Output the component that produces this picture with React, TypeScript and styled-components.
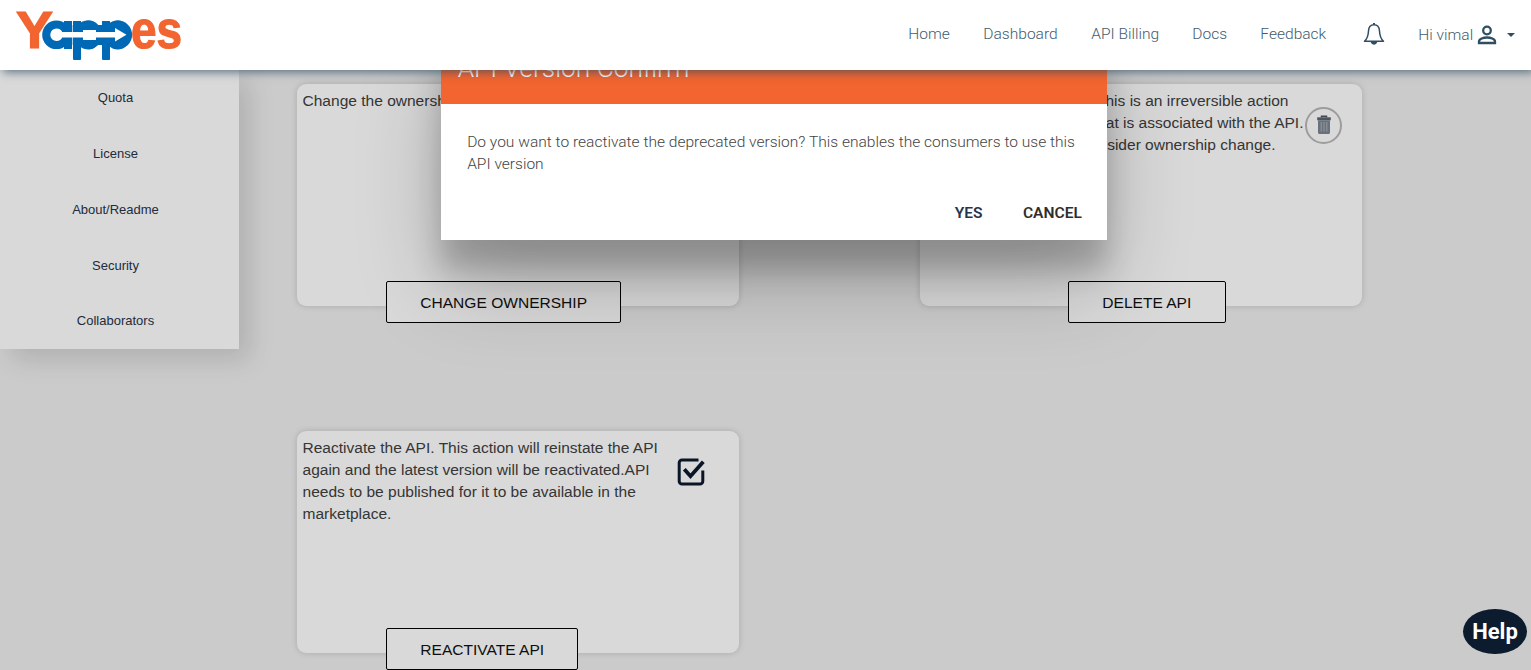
import React from "react";
import styled, { createGlobalStyle } from "styled-components";

const Global = createGlobalStyle`
  *, *::before, *::after { box-sizing: border-box; }
  html, body { margin: 0; height: 100%; overflow: hidden; background: #efefef; }
  body { font-family: Roboto, "Open Sans", sans-serif; }
`;

const Page = styled.div`
  height: 100vh;
  overflow: hidden;
  display: flex;
  flex-direction: column;
  isolation: isolate;
`;

const Header = styled.header`
  flex: none;
  height: 70px;
  background: #fff;
  display: flex;
  align-items: center;
  justify-content: space-between;
  padding: 0 16px 0 0;
  position: relative;
  z-index: 30;
  box-shadow: 3px 2px 9px 0 rgba(48, 78, 98, 0.75);
`;

const Nav = styled.nav`
  display: flex;
  align-items: center;
  height: 70px;
  padding-bottom: 3px;
  color: #3f5c6e;
  font-weight: 300;
  font-size: 15.55px;
`;

const NavLink = styled.a<{ $w: number }>`
  width: ${(p) => p.$w}px;
  white-space: nowrap;
`;

const BellSlot = styled.span`
  display: flex;
  width: 55px;
`;

const UserMenu = styled.span`
  display: flex;
  align-items: center;
  padding-top: 2px;
  white-space: nowrap;
`;

const Caret = styled.i`
  margin-left: 10px;
  border: 4.5px solid transparent;
  border-top-color: #304e62;
  border-bottom: 0;
`;

const Main = styled.main`
  flex: 1;
  min-height: 0;
  display: flex;
  align-items: flex-start;
`;

const Sidebar = styled.aside`
  flex: none;
  width: 239px;
  height: 278.7px;
  padding-right: 8px;
  background: #fff;
  display: flex;
  flex-direction: column;
  box-shadow: 11px 11px 24px rgba(0, 0, 0, 0.13);
`;

const SideItem = styled.a`
  flex: 1;
  display: flex;
  align-items: center;
  justify-content: center;
  font: 13px "Liberation Sans", Arial, sans-serif;
  color: #26344a;
`;

const Grid = styled.section`
  display: grid;
  grid-template-columns: 442px 442px;
  grid-auto-rows: 221.5px;
  column-gap: 181px;
  row-gap: 125.5px;
  padding: 14px 0 0 58px;
`;

const Card = styled.article`
  background: #fff;
  border-radius: 9px;
  box-shadow: 0 0 6px rgba(0, 0, 0, 0.17);
  padding: 5.5px 20px 0 5.5px;
  display: flex;
  flex-direction: column;
  justify-content: space-between;
`;

const CardTop = styled.div`
  display: flex;
  justify-content: space-between;
`;

const CardText = styled.p`
  margin: 0;
  font: 15.54px/22px "Liberation Sans", Arial, sans-serif;
  color: #404040;
  white-space: nowrap;
`;

const RightText = styled(CardText)`
  width: 378px;
  display: flex;
  flex-direction: column;
  align-items: flex-start;
`;

const TextLine = styled.span<{ $end: number }>`
  align-self: flex-end;
  margin-right: ${(p) => p.$end}px;
`;

const TrashRing = styled.span`
  flex: none;
  width: 37px;
  height: 37px;
  margin-top: 17px;
  border: 2px solid #b9b9b9;
  border-radius: 50%;
  display: flex;
  align-items: center;
  justify-content: center;
`;

const CheckSlot = styled.span`
  margin: 20px 13px 0 0;
`;

const CardButton = styled.button<{ $left: number }>`
  flex: none;
  align-self: flex-start;
  height: 42px;
  margin: 0 0 -17.5px ${(p) => p.$left}px;
  padding: 1px 33.3px 0;
  background: #fff;
  border: 1.3px solid #000;
  border-radius: 2px;
  font: 15.55px "Liberation Sans", Arial, sans-serif;
  color: #111;
  white-space: nowrap;
`;

const Overlay = styled.div`
  position: absolute;
  inset: 0;
  z-index: 10;
  background: rgba(0, 0, 0, 0.15);
  display: flex;
  justify-content: center;
  align-items: flex-start;
  padding-left: 17px;
`;

const Dialog = styled.div`
  width: 666.7px;
  margin-top: 32px;
  background: #fff;
  box-shadow: 0 30px 27px 0 rgba(0, 0, 0, 0.2), 0 44px 86px 0 rgba(0, 0, 0, 0.22);
`;

const DialogTitle = styled.h4`
  margin: 0;
  height: 71.7px;
  padding: 19px 17px 0;
  background: #f26430;
  color: #fff;
  font-weight: 300;
  font-size: 26.3px;
  line-height: 34px;
`;

const DialogText = styled.p`
  margin: 0;
  padding: 27.3px 26px 0 26.5px;
  font-weight: 300;
  font-size: 15.55px;
  line-height: 22px;
  color: #444;
`;

const Actions = styled.div`
  display: flex;
  justify-content: flex-end;
  gap: 40.5px;
  padding: 29.3px 25.5px 0 0;
  height: 65px;
`;

const Action = styled.button<{ $c: string }>`
  height: 18px;
  padding: 0;
  border: 0;
  background: none;
  font: 600 15.55px/18px Roboto, sans-serif;
  color: ${(p) => p.$c};
`;

const Help = styled.button`
  position: absolute;
  right: 4px;
  bottom: 16px;
  z-index: 40;
  width: 64px;
  height: 45.5px;
  padding: 0;
  border: 0;
  border-radius: 50%;
  background: #0c1b2e;
  color: #fff;
  font: 700 22px Roboto, sans-serif;
`;

const Logo = () => (
  <svg width="200" height="70" viewBox="0 0 200 70" fontFamily="Liberation Sans, Arial, sans-serif" fontWeight="700">
    <g fill="#f26430" stroke="#f26430" strokeWidth="1.200">
      <text x="16" y="48" fontSize="52.500" textLength="37" lengthAdjust="spacingAndGlyphs">Y</text>
      <text x="131" y="48" fontSize="51" textLength="51" lengthAdjust="spacingAndGlyphs">es</text>
    </g>
    <g fill="#0069b5">
      <text x="45" y="47.500" fontSize="46">a</text>
      <text x="70" y="48.500" fontSize="51">p</text>
      <text x="99" y="48.500" fontSize="51">p</text>
      <circle cx="56.500" cy="34.800" r="14.300" />
      <circle cx="88" cy="34.800" r="14.300" />
      <circle cx="117.800" cy="34.800" r="14.300" />
      <path d="M64 21h8v28h-8zM73 21h8v38.500h-8zM102 21h8v38.500h-8z" />
      <path d="M62 25h50v20H62z" />
    </g>
    <path d="M72.500 20v40" stroke="#fff" strokeWidth=".7" />
    <path d="M56.500 28.500c3 0 4.800 1.300 5.700 3.500H83v-2h13v2h19v-4l11.500 6.800L115 41.500V37.500H96V40H83v-2.500H62.200c-1 2.200-2.700 3.500-5.700 3.500a6.250 6.250 0 0 1 0-12.500z" fill="#fff" />
  </svg>
);

const Bell = () => (
  <svg width="22" height="24" viewBox="0 0 22 24" fill="none" stroke="#304e62" strokeWidth="1.500" strokeLinejoin="round">
    <path d="M11 2.800C7.300 2.800 5.700 5.600 5.500 9c-.2 4.500-.9 7.500-4 10.300h19C17.400 16.500 16.700 13.500 16.500 9c-.2-3.400-1.800-6.200-5.500-6.200z" />
    <path d="M11 1v1.500" strokeWidth="2" />
    <path d="M8.500 20a2.600 2.600 0 0 0 5 0z" fill="#304e62" />
  </svg>
);

const Person = () => (
  <svg width="20" height="20" viewBox="0 0 20 20" fill="none" stroke="#304e62" strokeWidth="2.300">
    <circle cx="10" cy="5.500" r="3.800" />
    <path d="M2 18v-1.500c0-2.600 4.500-4 8-4s8 1.400 8 4V18z" />
  </svg>
);

const Trash = () => (
  <svg width="16" height="20" viewBox="0 0 16 20">
    <path d="M5.500 2.500V1.300h5v1.200" fill="none" stroke="#4e5660" strokeWidth="1.500" />
    <path d="M1.200 2.300h13.600v3H1.200z" fill="#5c6570" />
    <path d="M2 5.300h12v12.200a1.500 1.500 0 0 1-1.500 1.500h-9A1.500 1.500 0 0 1 2 17.500z" fill="#7c8590" />
    <path d="M5.200 7v9.500M8 7v9.500M10.800 7v9.500" stroke="#aeb4bb" strokeWidth="1" />
  </svg>
);

const Check = () => (
  <svg width="29" height="30" viewBox="0 0 29 30" fill="none" stroke="#0c1b2e" strokeWidth="3">
    <path d="M21.500 3H5a2.800 2.800 0 0 0-2.800 2.800v18.400A2.800 2.800 0 0 0 5 27h18a2.800 2.800 0 0 0 2.800-2.800V13.500" />
    <path d="M7.300 12.300l6.200 6.900L26.300 4.800" strokeWidth="3.800" />
  </svg>
);

const sideItems = ["Quota", "License", "About/Readme", "Security", "Collaborators"];
const links: [string, number][] = [
  ["Home", 75],
  ["Dashboard", 108],
  ["API Billing", 101],
  ["Docs", 68],
  ["Feedback", 103],
];

export default function App() {
  return (
    <Page>
      <Global />
      <Header>
        <Logo />
        <Nav>
          {links.map(([label, w]) => (
            <NavLink key={label} $w={w}>{label}</NavLink>
          ))}
          <BellSlot><Bell /></BellSlot>
          <UserMenu>
            Hi vimal&nbsp;<Person /><Caret />
          </UserMenu>
        </Nav>
      </Header>
      <Main>
        <Sidebar>
          {sideItems.map((s) => <SideItem key={s}>{s}</SideItem>)}
        </Sidebar>
        <Grid>
          <Card>
            <CardText>Change the ownership</CardText>
            <CardButton $left={83.5}>CHANGE OWNERSHIP</CardButton>
          </Card>
          <Card>
            <CardTop>
              <RightText>
                <TextLine $end={15}>This is an irreversible action</TextLine>
                <TextLine $end={0}>that is associated with the API.</TextLine>
                <TextLine $end={28}>consider ownership change.</TextLine>
              </RightText>
              <TrashRing><Trash /></TrashRing>
            </CardTop>
            <CardButton $left={142.5}>DELETE API</CardButton>
          </Card>
          <Card>
            <CardTop>
              <CardText>
                Reactivate the API. This action will reinstate the API<br />
                again and the latest version will be reactivated.API<br />
                needs to be published for it to be available in the<br />
                marketplace.
              </CardText>
              <CheckSlot><Check /></CheckSlot>
            </CardTop>
            <CardButton $left={83.5}>REACTIVATE API</CardButton>
          </Card>
        </Grid>
      </Main>
      <Overlay>
        <Dialog>
          <DialogTitle>API Version Confirm</DialogTitle>
          <DialogText>
            Do you want to reactivate the deprecated version? This enables the consumers to use this
            API version
          </DialogText>
          <Actions>
            <Action $c="#26344e">YES</Action>
            <Action $c="#2e2e2e">CANCEL</Action>
          </Actions>
        </Dialog>
      </Overlay>
      <Help>Help</Help>
    </Page>
  );
}
